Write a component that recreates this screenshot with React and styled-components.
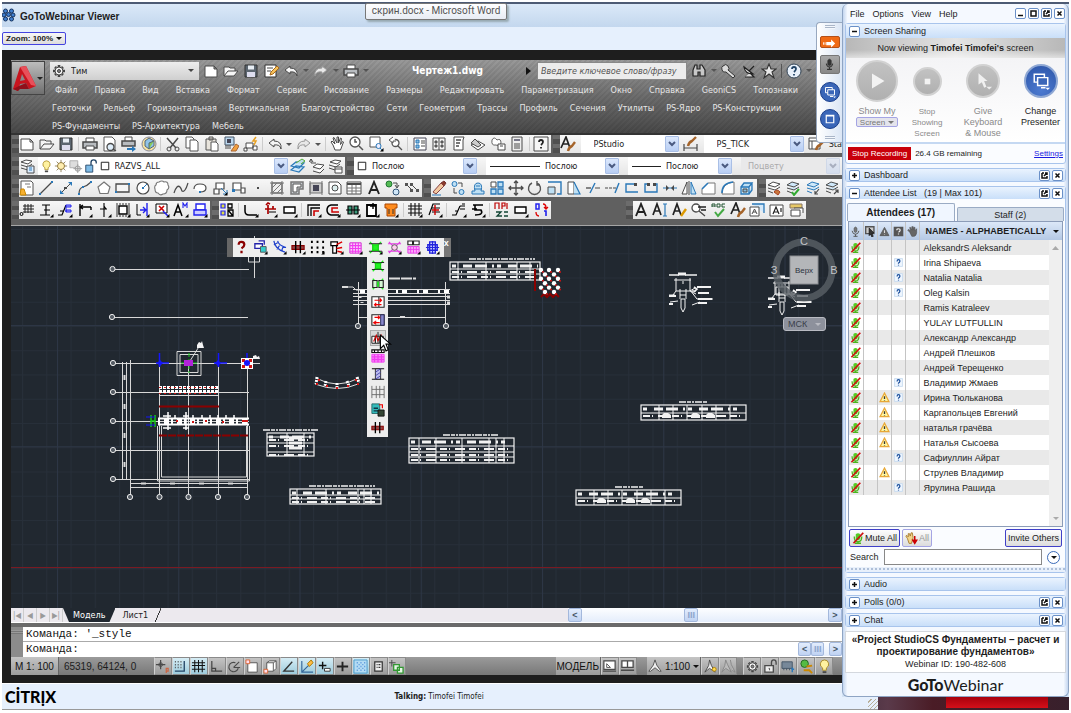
import React from 'react';
import styled, { createGlobalStyle, css } from 'styled-components';

const tahoma = '"DejaVu Sans Condensed", "DejaVu Sans", sans-serif';
const arial = '"Liberation Sans", Arial, sans-serif';

const GlobalStyle = createGlobalStyle`
  * { box-sizing: border-box; }
  body { margin: 0; background: #fff; font-family: ${arial}; font-size: 9px; color: #1c1c1c; }
  button, input, select { font: inherit; color: inherit; margin: 0; padding: 0; border: 0; background: none; }
  svg { display: block; }
`;

/* icons: each entry is a list of [path, stroke, fill, width] on a 16x16 grid */
const ink = '#4a4a4a';
const blue = '#2a78b8';
const corner = ['M12 15.500h3.500V12z', 'none', '#000'];
const cell = '#bfe0f4';

const icons = {
  page: [['M2 3h9l3 3v8H2zM11 3v3h3', ink, '#fff']],
  open: [['M1 13V4h5l1 1h5v3M1 13L5 8h10l-4 5z', ink, '#f6f6f6']],
  save: [['M2 2h12v12H2z', '#333', '#5c6670'], ['M5 2.500h6v4H5z', 'none', '#e8eef4'], ['M4 9h8v5H4z', 'none', '#dde']],
  saveAs: [['M2 2h11v12H2z', '#333', '#fff'], ['M4 5h6M4 8h4', ink], ['M7 12l1-3 6-6 2 2-6 6z', '#a86a1c', '#f6c15a']],
  undo: [['M7 3L2 7l5 4V9q6-1 7 4 1-8-7-8z', ink, '#f5f5f5']],
  redo: [['M9 3l5 4-5 4V9q-6-1-7 4-1-8 7-8z', '#999', '#e8e8e8']],
  print: [['M4 6V2h8v4', ink, '#fff'], ['M1 6h14v6H1z', ink, '#b8bcc0', 1.5], ['M4 10h8v4H4z', ink, '#fff']],
  preview: [['M2 1h8l3 3v11H2z', '#555', '#fff'], ['M12 11a3.500 3.500 0 1 1-7 0 3.500 3.500 0 0 1 7 0zM11 13l3 2', ink, '#dfeefa', 1.3]],
  publish: [['M4 5V1h7v4', ink, '#fff'], ['M1 5h13v5H1z', ink, '#b8bcc0', 1.5], ['M6 12h5v-2l4 3-4 3v-2H6z', 'none', blue]],
  globe: [['M15 8A7 7 0 1 1 1 8a7 7 0 0 1 14 0z', '#889', '#f6e3a0'], ['M4 5l4-3 5 3v5l-5 3-4-3z', '#567', '#8fc3e8'], ['M8 13V7l5-2', '#567', '#8c5']],
  cut: [['M2 2l9 10M13 2L5 12', ink, 'none', 1.5], ['M6 13a2 2 0 1 1-4 0 2 2 0 0 1 4 0zM14 13a2 2 0 1 1-4 0 2 2 0 0 1 4 0z', ink]],
  copy: [['M2 1h6l2 2v9H2z', '#555', '#fff'], ['M6 4h6l2 2v9H6z', '#555', '#fff']],
  paste: [['M2 3h10v11H2zM5 1h4v3H5z', '#555', '#e8e4dc'], ['M7 6h5l2 2v7H7z', '#555', '#fff']],
  match: [['M2 1h9v8H2z', '#456', '#bcd8ee'], ['M4 3h4v4H4z', 'none', '#445'], ['M2 10h6M2 12h6', ink], ['M8 15l5-7 3 2-3 5z', '#a63', '#f0a040']],
  blockEdit: [['M3 7h7v5H3zM1 12h3v3H1zM10 10h4v4h-4z', ink, '#fff'], ['M13 1l-3 4h3l-2 4', '#e8a020', 'none', 1.5]],
  hand: [['M4 9L2 6l1-1 3 3-2-6 1-.5L8 7V1h1.500v6l2-5 1 .5-1 6 2-3 1 .5-3 8H6z', ink, '#fff']],
  zoomTime: [['M11 6A5 5 0 1 1 1 6a5 5 0 0 1 10 0z', '#555', '#fff', 1.3], ['M6 3v3h2M10 10l4 4', '#555', 'none', 1.5]],
  zoomWin: [['M2 1h10v10H2z', '#555', '#fff'], ['M13 10a2.500 2.500 0 1 1-5 0 2.500 2.500 0 0 1 5 0zM12 12l3 3', blue, '#eef']],
  zoomPrev: [['M11 7a3.500 3.500 0 1 1-7 0 3.500 3.500 0 0 1 7 0zM10 10l4 4', '#555', '#fff', 1.3], ['M5 1L1 4l4 3V5h3', '#555', '#fff']],
  props: [['M2 2h12v12H2z', '#445', '#fff'], ['M4 4h3v3H4zM4 9h3v3H4z', blue, '#8bd'], ['M9 5h4M9 7h4M9 10h4', ink]],
  palette: [['M2 2h12v12H2zM8 2v12', ink, '#f4f4f4'], ['M4 5h2v2H4zM4 9h2v2H4zM10 5h2v2h-2zM10 9h2v2h-2z', ink, '#888']],
  toolPal: [['M3 1h10l-1 3v10H3z', ink, '#fff'], ['M5 4h5M5 7h4M5 10h3', ink, 'none', 1.5]],
  sheet: [['M1 9l7-4 7 4-7 5z', ink, '#fff'], ['M1 7l4-4 6 6-3 2z', ink, '#ccc']],
  markup: [['M2 4q2-4 5 0 4-2 4 3-1 4-5 2-5 1-4-5z', '#666', '#fff'], ['M8 8h7v6H8zM10 10h3', ink, '#fff']],
  calc: [['M3 1h10v14H3z', ink, '#eee'], ['M5 3h6v2H5z', 'none', '#778'], ['M5 8h6M5 10h6M5 12h6', ink]],
  help: [['M1 1h14v14H1z', ink, '#f6f6f6'], ['M6 6q0-2 2-2t2 2q0 1-2 3M8 11v1.500', '#222', 'none', 1.8]],
  helpRound: [['M15 8A7 7 0 1 1 1 8a7 7 0 0 1 14 0z', '#345', '#e8f0fa'], ['M6 6q0-2 2-2t2 2q0 1-2 3M8 11v1.500', '#246', 'none', 1.8]],
  fontBrush: [['M1 12L6 1l4 11M3 8h6', '#222', 'none', 1.7], ['M8 15q1-4 4-5l3-4', '#a5642a', 'none', 2.4]],
  dimBrush: [['M1 8v7M14 8v7M1 12h13', ink, 'none', 1.2], ['M5 10q1-4 4-5l4-4', '#a5642a', 'none', 2.4]],
  tableBrush: [['M1 2h11v11H1zM1 5h11M4 5v8', ink, '#fff'], ['M8 14q1-4 4-5l3-3', '#a5642a', 'none', 2.4]],
  layers: [['M2 4l5-2 6 1-4 3zM2 7l7 2 4-3M2 10l7 2 4-3', ink, '#fff'], ['M8 8h7v7H8z', ink, '#def'], ['M10 10h3M10 12h3', blue]],
  layerCur: [['M1 12l5-4 8 1-5 5zM1 8l5-4 8 1-5 5z', blue, '#cfe8fa', 1.2], ['M6 5l6-4 3 2-4 3', '#5a3', '#bde']],
  layerPrev: [['M4 9l4-3 7 1-4 4zM4 13l7 2 4-4', ink, '#fff'], ['M2 1v4h5M2 1l-2 3M2 1l2 3', ink]],
  layerState: [['M3 4l5-2 6 1-4 3zM2 7l7 2 4-3M2 10l6 2', ink, '#fff'], ['M8 9h7v6H8zM8 11h7', ink, '#fff']],
  layerBrush: [['M2 5l5-3 7 2-5 3zM2 8l7 2 5-3M2 11l5 2', ink, '#fff'], ['M8 12q3-4 6 0l-2 3z', '#a42', '#c8763c']],
  layerCheck: [['M2 5l5-3 7 2-5 3zM2 8l7 2 5-3M2 11l5 2', ink, '#cfe8fa'], ['M7 12l2 3 5-6', '#3a3', 'none', 2]],
  layerIn: [['M2 5l5-3 7 2-5 3zM2 8l7 2 5-3M2 11l5 2', blue, '#cfe8fa'], ['M14 9l-4 5M10 11v3h3', ink, 'none', 1.2]],
  layerOut: [['M2 5l5-3 7 2-5 3zM2 8l7 2 5-3M2 11l5 2', ink, '#cfe8fa'], ['M10 14l4-4M11 10h3v3', ink, 'none', 1.2]],
  bulb: [['M8 1a4.500 4.500 0 0 1 2 8.500V12H6V9.500A4.500 4.500 0 0 1 8 1z', '#a98a2a', '#fff2a0'], ['M6 14h4', ink, 'none', 2]],
  sun: [['M8 1v14M1 8h14M3 3l10 10M13 3L3 13', '#8a7a50'], ['M12 8a4 4 0 1 1-8 0 4 4 0 0 1 8 0z', '#8a7030', '#ffeeb0']],
  freeze: [['M1 2h9v8H1z', '#aaa', '#ddd'], ['M13 11a3 3 0 1 1-6 0 3 3 0 0 1 6 0z', '#999', '#ddd'], ['M10 6v10M5 11h10', '#999']],
  lock: [['M2 7h8v8H2z', '#246', '#7fbbe6'], ['M8 7V4q0-3 3-3t3 3v1', '#246', 'none', 1.5]],
  square: [['M3 3h10v10H3z', '#222', '#fff', 1.3]],
  line: [['M2 14L14 2', ink, 'none', 1.2], ['M13 1h2v2h-2zM1 13h2v2H1z', 'none', blue]],
  xline: [['M2 14L14 2', ink], ['M10 2h4v4zM6 14H2v-4z', 'none', blue], ['M6 7h3v2H6z', 'none', ink]],
  pline: [['M2 14q0-6 4-7t8-5', ink, 'none', 1.2], ['M13 1h2v2h-2zM1 13h2v2H1zM5 6h2v2H5z', 'none', blue]],
  polygon: [['M8 2l6 5-2 6.500H4L2 7z', '#777', '#fff', 1.2]],
  rect: [['M1 4h13v8H1z', ink, '#f6f6f6', 1.3], ['M13 3h2v2h-2zM0 11h2v2H0z', 'none', blue]],
  circle: [['M14 8A6 6 0 1 1 2 8a6 6 0 0 1 12 0z', ink, '#fff', 1.2], ['M8 8l4-4', blue], ['M7 7h2v2H7z', 'none', blue]],
  cloud: [['M5 2q3-2 5 0 4-1 4 3 2 3-1 5 0 4-4 4-3 2-5-1-3 0-3-4-1-3 1-4 0-3 3-3z', '#777', '#fff', 1.1]],
  spline: [['M1 13q3-9 6-6 1 1 2 4 3 2 6-8', ink, 'none', 1.2]],
  ellipse: [['M2 9q0-5 6-5t6 4-6 4', ink, '#fff', 1.2], ['M7 11h2v2H7z', 'none', blue]],
  block: [['M4 3h8v6H4zM2 9h5v5H2z', ink, '#fff', 1.2], ['M9 8l6 6M15 10v4h-4', blue]],
  makeBlock: [['M2 3h8v7H2zM10 8h4v5h-4z', ink, '#fff', 1.2], ['M1 9h3v3H1z', 'none', blue]],
  point: [['M7 7h2v2H7z', 'none', ink]],
  hatch: [['M3 3h10v10H3z', ink, '#eee'], ['M3 8l5-5M3 13L13 3M8 13l5-5M1 3h14M1 13h14M3 1v14M13 1v14', '#777']],
  gradient: [['M2 2h12v7h-4v5H2z', '#777', '#c8ccd0', 1.5], ['M4 4h8v3H8v5H4z', '#555', '#fff']],
  boundary: [['M2 3h12v10H2z', '#777', '#ccc'], ['M5 5h6v6H5z', 'none', '#445'], ['M2 1v14M14 1v14', '#777']],
  region: [['M2 2h9l3 3v9H2z', ink, '#fff'], ['M11 8a3 3 0 1 1-6 0 3 3 0 0 1 6 0z', ink, '#dee']],
  table: [['M1 2h14v12H1z', ink, '#fff'], ['M1 3h14v2H1z', 'none', ink], ['M1 8h14M1 11h14M6 5v9M10 5v9', '#777']],
  letterA: [['M3 14L8 2l5 12M5 10h6', '#222', 'none', 1.9]],
  addSel: [['M7 4a3 3 0 1 1-6 0 3 3 0 0 1 6 0z', '#273', '#5b5'], ['M14 12a3 3 0 1 1-6 0 3 3 0 0 1 6 0z', '#357', '#cfe6f8'], ['M8 3h4v4M10 5l2 3 2-3', ink]],
  dots: [['M2 4l6 6M7 4l6 6', ink], ['M1 3h3v3H1zM6 3h3v3H6zM6 9h3v3H6zM12 9h3v3h-3z', 'none', '#555']],
  sheetYellow: [['M2 1h10l2 2v12H2z', '#555', '#fff'], ['M2 9h3l2 6H1z', '#c80', '#f6b030'], ['M6 4h5M8 7h4', '#777']],
  erase: [['M2 12l3 2 8-8-3-3z', '#844', '#f2c8a0'], ['M10 3l3-2 2 2-2 3', '#733', '#8a3a2a'], ['M1 15h9', blue]],
  copyObj: [['M7 4a2.500 2.500 0 1 1-5 0 2.500 2.500 0 0 1 5 0zM14 12a2.500 2.500 0 1 1-5 0 2.500 2.500 0 0 1 5 0z', blue, cell], ['M8 3h4v4M4 8v5h3', ink]],
  offset: [['M2 14h12v-3h-3q2-8-3-8T5 11H2z', blue, cell], ['M4 9h8M6 6h4', blue]],
  array: [['M2 2h5v5H2z', ink, '#fff'], ['M9 2h5v5H9zM2 9h5v5H2zM9 9h5v5H9z', blue, cell, 1.3]],
  move: [['M8 1v14M1 8h14M6 3l2-2 2 2M6 13l2 2 2-2M3 6L1 8l2 2M13 6l2 2-2 2', ink, 'none', 1.3]],
  rotate: [['M10 3a6 6 0 1 1-5 0M10 1v4h3', '#555', 'none', 1.4]],
  scale: [['M1 2h13v12h-4', blue, 'none', 1.4], ['M1 7h7v7H1z', ink, cell]],
  stretch: [['M2 2h6v12H2z', ink, '#fff'], ['M8 2l6 12H8', blue, cell, 1.2]],
  trim: [['M1 8h5', ink, 'none', 1.3], ['M5 13L10 3', blue, 'none', 1.4], ['M10 8h5', ink, 'none', 1]],
  extend: [['M1 8h3M5 8h3M9 8h3', ink, 'none', 1.2], ['M11 13l4-10', blue, 'none', 1.4]],
  breakPt: [['M13 4H2v8h12', blue, 'none', 1.4], ['M10 3h3v3h-3z', 'none', ink]],
  breakGap: [['M5 4H2v8h12V4h-4', blue, 'none', 1.4], ['M4 3h3v3H4zM10 3h3v3h-3z', 'none', ink]],
  join: [['M1 8h14', blue], ['M4 5v6l3-3zM12 5v6L9 8z', 'none', ink]],
  mirror: [['M6 2v12H1z', ink, '#fff'], ['M10 2v12h5z', blue, cell], ['M8 1v14', ink]],
  chamfer: [['M1 14V9l6-6h7v11z', '#777', '#fff'], ['M1 9l6-6', blue, 'none', 1.6]],
  fillet: [['M2 14q0-11 12-12v12z', '#777', '#fff'], ['M2 13q0-10 11-11', blue, 'none', 1.6]],
  explode: [['M2 7h8v7H2zM2 7l3-4h8l-3 4M13 3v7l-3 4', blue, cell, 1.3], ['M4 9h4v3H4z', ink, '#8bd']],
  gridAxis: [['M6 2v9M9 2v9M12 2v9M4 4h11M4 7h11M4 10h11', '#222'], ['M4 12a1.500 1.500 0 1 1-3 0 1.500 1.500 0 0 1 3 0z', '#000']],
  levels: [['M4 3h8M6 8h6M2 13h10M8 3v10', '#000', 'none', 1.2]],
  axisBlue: [['M1 13h4l4-10M3 9h4', '#000', 'none', 1.2], ['M9 3h5v2H9zM9 8h5v2H9zM9 5v5', '#22e', '#aaf']],
  leaderL: [['M3 2v12M3 5h11M6 3L3 5l3 2M14 5v3', '#000', 'none', 1.4]],
  axisV: [['M8 1v14M4 7h7M8 4l2 3', '#000', 'none', 1.1]],
  hatchBox: [['M4 4h8v8H4z', '#000', '#fff', 1.4], ['M2 1v14M5 1v2M8 1v2M11 1v2M14 1v14M5 13v2M8 13v2M11 13v2', '#333', 'none', 1]],
  arrowBlue: [['M3 2v11h4', '#000'], ['M13 1v13M6 8h6M9 5l3 3-3 3', '#22e', 'none', 1.4]],
  boxCross: [['M2 2h11v9H2z', '#000', '#fff'], ['M5 4l5 5M10 4L5 9', '#c00', 'none', 1.6], ['M9 9l5 5', '#22e', 'none', 1.5]],
  textM: [['M1 14L5 3l4 11M3 10h4', '#000', 'none', 1.5], ['M10 6V1l2 3 2-3v5', '#22e', 'none', 1.1]],
  blueBoxes: [['M4 2h9v6H4z', '#22e', '#fff', 1.4], ['M2 8h12v5H2z', '#22e', '#ccf', 1.4]],
  boltSet: [['M2 2h4v4H2zM2 9h4v4H2z', '#22e', '#dd4', 1.2], ['M9 2h4v4H9zM9 8h5v6H9zM9 8l5 6', '#000', 'none', 1.3]],
  curveL: [['M2 3v6q0 4 4 4h8', '#000', 'none', 1.5]],
  redTee: [['M3 7h11M6 3v9M8 2L6 1 4 3M11 4v3', '#a00', 'none', 1.7], ['M7 10h7', '#000']],
  smallBox: [['M2 5h11v6H2z', '#000', '#fff', 1.4]],
  cornerRed: [['M2 14V3h12M5 14V6h9', '#000', 'none', 1.3], ['M8 14V9h5', '#c00', 'none', 1.6]],
  loopRed: [['M13 3H6Q2 4 2 8t4 5h8', '#000', 'none', 1.5], ['M13 6H7v4h7', '#c00', 'none', 1.5]],
  beamGreen: [['M3 4h4v8H3zM9 4h4v8H9z', '#000', '#3a9a7a', 1.2], ['M1 8h14', '#000']],
  boltBox: [['M3 3h9v11H3z', '#000', '#fff', 1.8], ['M9 1v6M6 4h6', '#000', 'none', 1.4]],
  orange: [['M2 2h12v4h-2v8H4V6H2z', '#a40', '#ff8c1e'], ['M6 7v5M10 7v5', '#333']],
  mesh: [['M4 1v13M8 1v13M12 1v13M1 4h14M1 7h14M1 11h14', '#111', 'none', 1.1]],
  meshRed: [['M2 13L6 2h7M5 6h8M5 10h8', '#000', 'none', 1.2], ['M8 3v10M5 8h7', '#c00', 'none', 1.4]],
  zigzag: [['M1 13h4l4-9M4 9h3M9 4h5M9 7h5M11 2h3', '#000', 'none', 1.2]],
  fiveB: [['M3 3h10M5 3v5h6q3 5-6 5M2 7h5', '#000', 'none', 1.6]],
  num: [['M1 7V1h4v6M8 7V1h3v3H8M13 1v6', '#b00', 'none', 1.2], ['M2 10h5l-4 4h5M10 10h4M10 14h4', '#143', 'none', 1.3]],
  zeroOne: [['M3 2h3v5H3z', '#22e', 'none', 1.5], ['M10 2q3 0 3 4M11 5l2 2 2-2M6 14q-3 0-3-4', '#d00', 'none', 1.3], ['M11 9h2v5', '#22e', 'none', 1.6]],
  textI: [['M1 13L5 2l4 11M3 9h5', '#222', 'none', 1.7], ['M11 2h4M13 2v12M11 14h4', blue, 'none', 1.2]],
  textEdit: [['M1 13L5 2l4 11M3 9h5', '#222', 'none', 1.7], ['M9 14l5-7', '#d90', 'none', 2.4]],
  find: [['M9 6a4 4 0 1 1-8 0 4 4 0 0 1 8 0zM8 9l6 5', ink, '#fff', 1.3], ['M7 5h8M10 8h5', '#222', 'none', 1.4]],
  spell: [['M1 5V2h3v3M1 4h3M6 2v3h3V2H6M11 5V2h3M11 5h3', '#253', 'none', 1], ['M4 10l3 4 6-7', '#4a4', 'none', 2]],
  textScale: [['M3 2h12v9', blue, '#d4e8f8', 1.3], ['M1 5h9v9H1z', ink, '#fff'], ['M3 12l2.500-5L8 12M4 10h3', ink]],
  textJust: [['M1 3h13v11H1z', ink, '#fff'], ['M4 12l3-7 3 7M5 10h4M12 6v4', '#222', 'none', 1.2]],
  textBox: [['M2 2h12v4H2z', '#876', '#e6c866'], ['M3 8h9v6H3zM6 6h9v5', ink, '#fff']],
  binoc: [['M2 13V7l2-5h2v4h3V2h2l3 5v6H9V9H7v4z', '#222', '#c8c8c8', 1.2]],
  key: [['M2 3q3-3 5 0t0 4l7 6-2 2-7-6Q2 10 1 7t1-4z', '#333', '#dadada']],
  dish: [['M3 4q1 7 9 7zM8 8l5-5M4 14h9l-4-4', '#222', '#ddd', 1.2]],
  star: [['M8 1l2 5h5l-4 3 2 6-5-4-5 4 2-6-4-3h5z', '#333', '#e8e8e8', 1.1]],
  gear: [['M8 2v2M8 12v2M2 8h2M12 8h2M4 4l1 1M11 11l1 1M12 4l-1 1M5 11l-1 1', '#444', 'none', 2.6], ['M12 8a4 4 0 1 1-8 0 4 4 0 0 1 8 0z', '#444', '#f4f4f4'], ['M9.500 8a1.500 1.500 0 1 1-3 0 1.500 1.500 0 0 1 3 0z', '#444', '#888']],
  question: [['M5 5q0-3 3-3t3 3q0 2-3 4M8 11.500V14', '#8a0000', 'none', 2.4]],
  pileBlue: [['M2 4h8v5H2zM6 1h6v4', '#22a', '#fff', 1.4], ['M8 7h6v6H8z', '#555', '#3cc']],
  arcBlue: [['M2 1q1 9 12 12M6 1q1 5 9 7M2 5l4-2M5 10l3-4M10 12l2-5', '#24c', 'none', 1.3]],
  beamRed: [['M1 6h13v4H1z', '#800', '#944', 1.2], ['M5 1v13M10 1v13', '#000', 'none', 1.5]],
  nine: [['M1 2h2M7 2h2M13 2h2M1 8h2M7 8h2M13 8h2M1 13h2M7 13h2M13 13h2', '#000', 'none', 2.4]],
  cageRed: [['M2 2h7v4H2zM4 6v8h4V6', '#000', '#fff', 1.3], ['M8 5l6-3M8 9l6-1M9 12l5 1', '#d00', 'none', 1.5]],
  pinkGrid: [['M2 3h12v11H2z', '#d020d0', '#fbd0fb'], ['M5 3v11M8 3v11M11 3v11M2 6h12M2 9h12M2 12h12', '#f03cf0', 'none', 1.2]],
  greenBox: [['M2 2l12 12M14 2L2 14', '#2e2', 'none', 1.4], ['M1 4h14M1 12h14', '#111', 'none', 1], ['M5 5h6v6H5z', '#1c1', '#21f321', 1.2]],
  greenPair: [['M2 2l12 12M14 2L2 14', '#2e2', 'none', 1.4], ['M2 4h5v8H2zM9 4h5v8H9z', '#222', '#d6f6d6', 1.3], ['M7 5h2v6H7z', 'none', '#2e2']],
  pinkX: [['M2 2l12 12M14 2L2 14M1 4h14M1 12h14', '#e23ce2', 'none', 1.3], ['M11 8a3 3 0 1 1-6 0 3 3 0 0 1 6 0z', '#555', '#fce']],
  pinkTop: [['M2 1h5v4H2zM8 1h6v4H8z', '#222', '#fff', 1.2], ['M2 7h12v7H2z', '#e23ce2', '#f9a8f9'], ['M5 7v7M8 7v7M11 7v7M2 10h12', '#f03cf0']],
  blueGrid: [['M3 5h10v6H3zM5 2h6v12H5z', '#22d', '#d8deff', 1.5], ['M1 8h14M8 1v14', '#22d', 'none', 1.3]],
  redArrows: [['M1 2h14v12H1zM9 2v12', '#222', '#fff', 1.2], ['M4 6h8M10 4l2 2-2 2M12 11H4M6 9l-2 2 2 2', '#e00', 'none', 1.3]],
  redHatch: [['M1 2h14v12H1z', '#222', '#fff', 1.2], ['M11 2h4v12h-4z', '#225', '#88c'], ['M4 5h6M8 3l2 2-2 2M10 11H3M6 9l-3 2 3 2', '#e00', 'none', 1.3]],
  stirrup: [['M1 6h4v8H1zM5 6h5v8H5zM8 1v13M11 6h3v8', '#222', '#fff', 1.1], ['M3 12l3-7 2 6 4-7', '#c00', 'none', 1.3]],
  pinkFull: [['M1 1h14v3H1z', '#111', '#fff', 1.3], ['M4 1v3M8 1v3M12 1v3', '#111', 'none', 1.3], ['M1 6h14v9H1z', '#f03cf0', '#fb8cfb'], ['M4 6v9M8 6v9M12 6v9M1 9h14M1 12h14', '#f03cf0', 'none', 1.5]],
  ibeam: [['M1 2h14M1 14h14', '#111', 'none', 1.4], ['M5 2h6v12H5z', '#222', '#bbe'], ['M5 6l6-4M5 10l6-4M5 14l6-4', '#44a']],
  mesh3: [['M1 1v14M6 1v14M10 1v14M15 1v14M1 5h14M1 11h14', '#666']],
  tealCalc: [['M1 1h9v11H1z', '#266', '#3bb'], ['M3 6h5M3 9h5', '#134', 'none', 1.5], ['M8 8h7v7H8z', '#111', '#343'], ['M9 2h4v4', '#e00', 'none', 1.4]],
  snapPt: [['M6 1v10M1 6h10', ink, 'none', 1.3], ['M8 6a2 2 0 1 1-4 0 2 2 0 0 1 4 0z', ink], ['M12 15v-5h2v3h-2', '#c64', 'none', 1.3]],
  snapDots: [['M2 3h1M5 3h1M8 3h1M2 6h1M5 6h1M8 6h1M2 9h1M5 9h1M8 9h1', ink, 'none', 1.6], ['M12 2v11H2', '#246', 'none', 1.4]],
  ortho: [['M3 2v11h11M3 10h4v3', '#444', 'none', 1.3]],
  polar: [['M12 9a5 5 0 1 1-3-5M7 9h7M7 9l6-6', ink, 'none', 1.2]],
  osnap: [['M3 4h10v10H3z', '#555', '#fff'], ['M1 1h4v4H1z', '#d63', '#fde']],
  osnap3: [['M4 4l3-2h7v8l-3 3H4zM4 4h7v9M11 4l3-2', '#555', '#fff'], ['M1 11h4v4H1z', '#d63', '#fde']],
  angle: [['M12 3L3 13h11', '#333', 'none', 1.4]],
  ducs: [['M3 2v12h12M3 14l7-7', '#369', 'none', 1.2], ['M9 5l4-4 2 3-4 4z', '#a70', '#fb4']],
  dyn: [['M2 7h8M6 3v8', '#111', 'none', 1.5], ['M8 10h6v3H8z', '#333', '#fff']],
  plus: [['M2 8h12M8 3v10', '#222', 'none', 2]],
  trans: [['M1 1h14v14H1z', '#4a9acc', '#b4dcf4'], ['M4 4h1M8 4h1M12 4h1M6 6h1M10 6h1M4 8h1M8 8h1M12 8h1M6 10h1M10 10h1M4 12h1M8 12h1M12 12h1', '#4a8ad8', 'none', 1.4]],
  quick: [['M4 3h8v10H4z', '#333', '#eee', 1.3], ['M6 6h1M8 6h2M6 9h1M8 9h2', '#333', 'none', 1.3]],
  selCycle: [['M3 1v7M0 4h7', ink], ['M5 6h6v6H5zM9 9h6v6H9z', '#393', '#e8f8e8', 1.4]],
  modelTri: [['M2 2h12v9H2zM1 13h14', ink, '#fff', 1.3], ['M5 9V5l4 4z', '#555']],
  layoutBoxes: [['M2 2h6v7H2zM8 2h6v7H8zM1 12h14', ink, '#fff', 1.4]],
  anno: [['M8 1l2 6 5 7h-2l-5-4-5 4H1l5-7z', ink, '#eee']],
  annoSun: [['M7 1l2 6 4 7-6-4-5 4 4-7z', ink, '#eee'], ['M14 11a2 2 0 1 1-4 0 2 2 0 0 1 4 0z', '#b80', '#fd5']],
  annoGray: [['M5 1l2 5 4 8-6-4-4 4 3-7zM10 1l1 5 4 8-3-2', '#888', '#bbb']],
  unlock: [['M2 7h9v7H2z', ink, '#eee', 1.4], ['M9 7V4q0-3 2.500-3T14 4v2', ink, 'none', 1.4], ['M6 10h1v2', ink]],
  hardware: [['M1 3h11v7H1z', '#456', '#789'], ['M3 10v2M6 10v2M9 10v2', '#456'], ['M12 9v5M11 11h3', blue, 'none', 1.5]],
  isolate: [['M10 5a4 4 0 1 1-8 0 4 4 0 0 1 8 0z', '#262', '#5b4'], ['M5 12h6l3 3M8 8l6-1', '#c80', 'none', 2]],
  mic: [['M6 3q2-3 4 0v5q-2 3-4 0z', '#555', '#777'], ['M3 7q1 5 5 5t5-5M8 12v3M5 15h6', '#555', 'none', 1.4]],
  micMuted: [['M5 3q3-3 6 0v6q-3 4-6 0z', 'none', '#55cc22'], ['M3 6q0 7 5 7t5-7M8 12v3M4 15h8', '#4ab81e', 'none', 1.8], ['M15 1L2 15', '#d01010', 'none', 2.4]],
  warn: [['M8 1.500l6.500 12.500H1.500z', '#e8a838', '#fff6a0', 1.8], ['M8 6v4M8 11.500v1', '#333', 'none', 1.9]],
  warnGray: [['M8 2l6.500 12h-13z', '#555', '#666', 1.2], ['M8 6v4M8 11.500v1', '#ddd', 'none', 1.6]],
  qBlue: [['M1 1h14v14H1z', '#c6daf0', '#f0f7ff', 1.5], ['M5.500 6q0-3 2.500-3t2.500 2.500Q10 8 8 9v1M8 12v1.500', '#1c4f9c', 'none', 2.2]],
  qGray: [['M2 2h12v12H2z', '#555', '#555', 2], ['M5.500 6q0-2 2.500-2t2.500 2Q10 8 8 9M8 11v1.500', '#eee', 'none', 1.8]],
  handGray: [['M4 9L1 6l1-1 3 2-1-5h1l2 4V1h2v5l1-4h1.500v5L14 4v6q-1 5-4 5H7z', '#555', '#666']],
  pageGray: [['M1 1h12v10H1z', '#555', '#ccc', 2], ['M6 3l7 7-3 1 2 4-2 1-2-4-2 2z', '#111', '#333']],
  handDown: [['M3 8L1 5l1-1 2 2V2h1.500l1 3 1-4H9l1 6-2 7H5z', '#a07020', '#f3d58a'], ['M12 5v7M9.500 10l2.500 4 2.500-4z', '#c00', '#c00', 1.8]],
  play: [['M4 2l10 6-10 6z', 'none', '#f2f2f2']],
  stop: [['M3 3h10v10H3z', 'none', '#f2f2f2']],
  pointer: [['M4 1l8 7H9l2 5-2 1-2-5-3 2z', 'none', '#f0f0f0'], ['M11 13h5l-2.500 2.500z', 'none', '#eee']],
  screens: [['M2 2h9v7H2z', '#fff', 'none', 1.3], ['M5 5h9v7H5zM8 14h4', '#fff', '#3a66b8', 1.3], ['M12 14h4l-2 2z', 'none', '#fff']],
  window: [['M3 3h10v10H3zM3 4h10', '#fff', 'none', 1.6]],
  micDark: [['M6 3q2-3 4 0v5q-2 3-4 0z', '#333', '#333'], ['M4 7q1 4 4 4t4-4M8 11v3M5 14h6', '#333', 'none', 1.3]],
  orangeArrow: [['M4 6h6V3l5 5-5 5v-3H4z', 'none', '#fff'], ['M0 8h1M2 8h1', '#fff', 'none', 3]],
  cursor: [['M3 1v12l3-3 2 5 2-1-2-5h4z', '#000', '#fff']],
};

const Glyph = ({ name, size = 16, fly }) => (
  <svg width={size} height={size} viewBox="0 0 16 16" aria-hidden="true">
    {(fly ? [...icons[name], corner] : icons[name]).map(([d, stroke = ink, fill = 'none', width = 1], i) => (
      <path key={i} d={d} stroke={stroke} fill={fill} strokeWidth={width} />
    ))}
  </svg>
);

const Page = styled.div`
  min-height: 100vh;
  padding: 2px 2px 3px;
  display: flex;
  flex-direction: column;
`;

const Desktop = styled.div`
  position: relative;
  flex: 1;
  display: flex;
  border-top: 2px solid #4d5b74;
  background: #d3e3f5;
`;

const Viewer = styled.main`
  flex: 1;
  min-width: 0;
  display: flex;
  flex-direction: column;
`;

const TitleBar = styled.header`
  height: 23px;
  display: flex;
  align-items: center;
  gap: 4px;
  padding-bottom: 2px;
  background: linear-gradient(#dbe9f8, #c3d7ee);
`;

const Title = styled.h1`
  margin: 3px 0 0;
  font-size: 10px;
  font-weight: bold;
`;

const TaskTip = styled.div`
  position: absolute;
  top: -1px;
  left: 34%;
  height: 17px;
  padding: 0 6px;
  border: 1px solid #777;
  border-radius: 2px;
  background: linear-gradient(#fff, #e8ecf4);
  box-shadow: 2px 2px 2px #7889;
  font: 10px/14px Roboto, "Open Sans", sans-serif;
  color: #555;
`;

const ZoomRow = styled.div`
  height: 23px;
  padding-top: 5px;
  background: #e6f0fd;
`;

const ZoomButton = styled.button`
  display: flex;
  align-items: center;
  gap: 3px;
  height: 13px;
  padding: 0 3px;
  border: 1px solid #4343e0;
  border-radius: 2px;
  background: linear-gradient(#f7f7f7, #dcdcdc);
  font-size: 8px;
  font-weight: bold;
`;

const Frame = styled.div`
  flex: 1;
  display: flex;
  flex-direction: column;
  padding: 10px 0 8px 9px;
  background: #1e1e1e;
`;

const Ribbon = styled.div`
  display: flex;
  height: 75px;
  padding-top: 1px;
  background: repeating-linear-gradient(135deg, #0000 0 2px, #00000010 2px 4px), linear-gradient(#999, #6c6c6c 50%, #484848);
  border-bottom: 2px solid #333;
`;

const AppButton = styled.button`
  width: 34px;
  height: 34px;
  border: 1px solid #444;
  background: linear-gradient(#bdbdbd, #6f6f6f);
  display: flex;
  align-items: center;
`;

const RibbonBody = styled.div`
  flex: 1;
  min-width: 0;
  padding-left: 5px;
  font-family: ${tahoma};
`;

const QuickRow = styled.div`
  display: flex;
  align-items: center;
  height: 19px;
  padding-right: 30px;
`;

const IconRow = styled.div`
  display: flex;
  align-items: center;
  gap: 4px;
  padding-left: 4px;
`;

const IconButton = styled.button`
  flex: none;
  display: flex;
  align-items: center;
  justify-content: center;
  ${p => p.$hot && css`
    outline: 1px solid #aaa;
    background: #d8d8d8;
  `}
`;

const Caret = styled.span`
  flex: none;
  width: 0;
  border: 3px solid transparent;
  border-width: 3px 3px 0;
  border-top-color: ${p => p.$color || '#111'};
`;

const FileName = styled.strong`
  flex: 1;
  text-align: center;
  font-size: 10px;
  color: #fff;
`;

const KeywordInput = styled.input`
  width: 150px;
  height: 18px;
  margin-left: 5px;
  padding: 0 3px;
  border: 1px solid #888;
  background: #ececec;
  font-style: italic;
  &::placeholder { color: #555; opacity: 1; }
`;

const MenuRow = styled.nav`
  display: flex;
  gap: ${p => p.$gap}px;
  padding-left: ${p => p.$start}px;
  margin-top: ${p => (p.$first ? 4 : 5)}px;
  line-height: 13px;
  white-space: nowrap;
`;

const MenuLink = styled.a`
  color: #e6e6e6;
  text-decoration: none;
`;

const Toolbars = styled.div`
  display: flex;
  flex-direction: column;
  gap: 4px;
  padding: 0 0 6px 1px;
  background: #606060;
  font-family: ${tahoma};
`;

const ToolRow = styled.div`
  display: flex;
  gap: 2px;
  height: 18px;
  overflow: hidden;
`;

const Bar = styled.div`
  flex: 0 ${p => (p.$grow ? 1 : 0)} ${p => p.$w}px;
  min-width: 0;
  display: flex;
  align-items: center;
  justify-content: space-between;
  padding-right: ${p => (p.$tight ? 0 : 2)}px;
  margin-left: ${p => (p.$apart ? 73 : 0)}px;
  border-left: 7px solid #565656;
  border-image: repeating-linear-gradient(#505050 0 1px, #6c6c6c 1px 2px) 7;
  background: linear-gradient(#f7f7f7, #e6e6e6);
  overflow: hidden;
`;

const Divider = styled.span`
  width: 1px;
  height: 14px;
  background: ${p => p.$color || '#ccc'};
`;

const ComboBox = styled.div`
  flex: ${p => (p.$w ? `0 0 ${p.$w}px` : 1)};
  display: flex;
  align-items: center;
  gap: 1px;
  height: 18px;
  padding: 0 ${p => (p.$gray ? 5 : 0)}px 0 ${p => p.$pad || 2}px;
  background: ${p => (p.$off ? '#e9e9ea' : p.$gray ? 'linear-gradient(#ededed, #cfcfcf)' : '#fff')};
  color: ${p => (p.$off ? '#aaa' : '#222')};
`;

const Picker = styled.select`
  flex: 1;
  min-width: 0;
  height: 16px;
  appearance: none;
  padding-left: 3px;
  opacity: 1;
`;

const Chevron = styled.span`
  flex: none;
  display: grid;
  place-items: center;
  width: 14px;
  height: 16px;
  border: 1px solid #a9bfe6;
  border-radius: 1px;
  background: linear-gradient(#dce8fc, #b8cef4);
  opacity: ${p => (p.$off ? 0.4 : 1)};
`;

const LineSample = styled.span`
  width: ${p => p.$w}px;
  height: 1px;
  margin: 0 1px 0 2px;
  background: #222;
`;

const Canvas = styled.div`
  position: relative;
  flex: 1;
  min-height: 383px;
  border-top: 1px solid #a5a5a5;
  background: #212830;
`;

const Drawing = styled.svg`
  position: absolute;
  inset: 0;
  width: 100%;
  height: 100%;
`;

const FloatBar = styled.div`
  position: absolute;
  left: 216px;
  top: 12px;
  width: 224px;
  height: 19px;
  display: flex;
  align-items: center;
  justify-content: space-between;
  border-left: 6px solid #666;
  background: #efefef;
  padding-left: 1px;
`;

const CloseTab = styled.button`
  align-self: stretch;
  width: 7px;
  background: #777;
  color: #fff;
  font: bold 9px/10px ${arial};
  display: flex;
`;

const Flyout = styled.div`
  position: absolute;
  left: 356px;
  top: 31px;
  width: 21px;
  display: flex;
  flex-direction: column;
  align-items: center;
  gap: 4px;
  padding: 2px 0;
  background: #ededed;
`;

const Pointer = styled.div`
  position: absolute;
  left: 366px;
  top: 108px;
`;

const CubeWrap = styled.div`
  position: absolute;
  right: 3px;
  top: 6px;
  width: 70px;
`;

const CubeLabel = styled.button`
  display: flex;
  align-items: center;
  gap: 8px;
  height: 14px;
  margin: 14px 0 0 14px;
  padding: 0 4px;
  border: 1px solid #b9bbc2;
  border-radius: 3px;
  background: #8d919c;
  color: #3a3f4b;
`;

const SheetTabs = styled.div`
  display: flex;
  height: 15px;
  background: #ece9ee;
  border-bottom: 1px solid #fff;
  font-family: ${tahoma};
`;

const NavCell = styled.button`
  width: 13px;
  border-right: 1px solid #ccc;
  color: #999;
  font-size: 8px;
`;

const SheetTab = styled.button`
  height: 14px;
  padding: 0 ${p => (p.$active ? 10 : 7)}px;
  background: ${p => (p.$active ? '#212830' : 'none')};
  color: ${p => (p.$active ? '#fff' : '#222')};
  clip-path: ${p => (p.$active ? 'polygon(0 0, 100% 0, calc(100% - 6px) 100%, 6px 100%)' : 'none')};
`;

const Slash = styled.span`
  width: 6px;
  height: 14px;
  background: linear-gradient(to bottom right, #0000 46%, #333 48% 54%, #0000 56%);
`;

const Scroller = styled.div`
  width: ${p => p.$w}px;
  margin-left: auto;
  display: flex;
  justify-content: space-between;
  background: linear-gradient(#fdfeff, #e4edfb);
`;

const ScrollButton = styled.button`
  width: 14px;
  height: 14px;
  margin-right: ${p => (p.$thumb ? '10%' : 0)};
  border: 1px solid #a3b8dc;
  border-radius: 2px;
  background: linear-gradient(#e3edfd, #bfd2f2);
  font: bold 9px/10px ${arial};
  color: ${p => (p.$thumb ? '#8ca4cc' : '#456')};
`;

const CommandArea = styled.div`
  display: flex;
  height: 34px;
  border-top: 4px solid #6a6a6a;
  background: #fff;
`;

const CommandGrip = styled.div`
  width: 12px;
  background: repeating-linear-gradient(#9a9a9a 0 1px, #777 1px 2px) 0 3px / 100% 4px no-repeat, #8c8c8c;
`;

const CommandLines = styled.div`
  flex: 1;
  font: 11px/15px "Liberation Mono", "Courier New", monospace;
  color: #111;
`;

const CommandLine = styled.div`
  display: flex;
  justify-content: space-between;
  height: 15px;
  padding-left: 3px;
  border-bottom: 1px solid ${p => (p.$last ? '#fff' : '#aaa')};
`;

const Status = styled.div`
  display: flex;
  align-items: stretch;
  height: 18px;
  background: linear-gradient(#9a9a9a, #787878);
  overflow: hidden;
`;

const StatusText = styled.button`
  flex: none;
  padding: 0 ${p => p.$pad || 4}px;
  display: flex;
  align-items: center;
  gap: 3px;
  border-right: 1px solid #666;
  background: linear-gradient(#c4c4c4, #9c9c9c);
  font-size: 10px;
  color: #111;
`;

const Coords = styled.span`
  width: 95px;
  padding-left: 5px;
  line-height: 19px;
  font-size: 10px;
`;

const StatusCell = styled.button`
  flex: none;
  display: grid;
  place-items: center;
  width: 18px;
  border: 1px solid #8a8a8a;
  border-left-color: #d0d0d0;
  background: ${p => (p.$on ? 'linear-gradient(#d6edf5, #9dcbdc)' : 'linear-gradient(#c4c4c4, #9c9c9c)')};
`;

const Spring = styled.span`
  flex: 1;
`;

const StatusGap = styled.span`
  width: ${p => p.$w}px;
`;

const Footer = styled.footer`
  display: flex;
  align-items: center;
  height: 27px;
  padding-left: 3px;
  border-top: 1px solid #fff;
  border-bottom: 1px solid #999;
  background: #e6f0fd;
`;

const CitrixMark = styled.strong`
  font: 900 16px/20px Lato, sans-serif;
  color: #000;
`;

const Talking = styled.span`
  flex: 1;
  text-align: center;
  padding-right: 20px;
  font: 8px ${tahoma};
`;

const FloatStrip = styled.div`
  position: absolute;
  right: 227px;
  top: 18px;
  width: 26px;
  height: 121px;
  display: flex;
  flex-direction: column;
  align-items: center;
  justify-content: space-between;
  padding: 2px 0;
  border: 1px solid #98a8bf;
  border-right: 0;
  border-radius: 4px 0 0 4px;
  background: linear-gradient(90deg, #fff, #dbe6f5);
`;

const StripGrip = styled.span`
  width: 10px;
  height: 4px;
  background: repeating-linear-gradient(#aab6c8 0 1px, #f4f8fd 1px 2px);
`;

const StripButton = styled.button`
  display: grid;
  place-items: center;
  width: 20px;
  height: ${p => p.$h}px;
  border: 1px solid ${p => p.$edge};
  border-radius: ${p => (p.$round ? '50%' : '2px')};
  background: ${p => p.$bg};
`;

const Side = styled.aside`
  flex: 0 0 227px;
  display: flex;
  flex-direction: column;
`;

const Panel = styled.div`
  flex: 1;
  display: flex;
  flex-direction: column;
  padding: 0 2px;
  border: 1px solid #8fa5c4;
  border-top: 0;
  border-radius: 6px;
  background: linear-gradient(90deg, #c4d6ef, #f5f9ff 2% 98%, #c4d6ef);
`;

const PanelMenu = styled.div`
  display: flex;
  align-items: center;
  gap: 8px;
  height: 19px;
  padding: 0 1px 0 5px;
`;

const PanelLink = styled.a`
  color: #1c1c1c;
  text-decoration: none;
`;

const WinButtons = styled.div`
  display: flex;
  gap: 2px;
  margin-left: auto;
`;

const WinButton = styled.button`
  display: grid;
  place-items: center;
  width: 11px;
  height: 11px;
  border: 1px solid #6a90c8;
  border-radius: 2px;
  background: #fff;
`;

const Section = styled.section`
  margin-bottom: 4px;
  border: 1px solid #a8c4ec;
  border-radius: 3px;
  background: #fafcff;
`;

const SectionHead = styled.div`
  display: flex;
  align-items: center;
  gap: 4px;
  height: ${p => (p.$tall ? 14 : 12)}px;
  padding: 0 2px 0 3px;
  background: linear-gradient(#eaf3fe, #c9dff9);
`;

const SectionTitle = styled.h2`
  margin: 0;
  font-size: 9px;
  font-weight: normal;
  white-space: pre;
`;

const Viewing = styled.p`
  margin: 0;
  line-height: 20px;
  text-align: center;
  background: linear-gradient(#fff0 60%, #fff8), linear-gradient(90deg, #b8b8b8, #e4e4e4 50%, #b8b8b8);
`;

const ShareRow = styled.div`
  display: grid;
  grid-template-columns: 54px 46px 66px 1fr;
  height: 86px;
  padding: 2px 0 0 4px;
  border-bottom: 2px solid #c4d8f2;
  background: linear-gradient(#f4f4f6, #fff);
`;

const ShareItem = styled.div`
  display: flex;
  flex-direction: column;
  align-items: center;
  text-align: center;
  font-size: ${p => (p.$small ? 8 : 9)}px;
  line-height: 11px;
  color: ${p => (p.$on ? '#1c1c1c' : '#8a8a8a')};
`;

const RoundSlot = styled.div`
  height: 42px;
  display: grid;
  place-items: center;
  margin-bottom: 4px;
`;

const RoundButton = styled.button`
  display: grid;
  place-items: center;
  width: ${p => p.$d}px;
  height: ${p => p.$d}px;
  border: 2px solid ${p => (p.$on ? '#8fa8d4' : '#d2d2d2')};
  border-radius: 50%;
  background: ${p => (p.$on ? 'radial-gradient(circle at 50% 80%, #4c7ad0, #2c55a8)' : 'linear-gradient(#c2c2c2, #b0b0b0)')};
`;

const ScreenSelect = styled.button`
  display: flex;
  align-items: center;
  gap: 3px;
  height: 10px;
  padding: 0 3px;
  border: 1px solid #a4a4e4;
  border-radius: 2px;
  background: #e4e4ec;
  font-size: 8px;
  color: #777;
`;

const RecordRow = styled.div`
  display: flex;
  align-items: center;
  gap: 4px;
  height: 19px;
  padding: 0 2px;
  font-size: 8px;
`;

const StopRecording = styled.button`
  height: 13px;
  padding: 0 4px;
  background: #c8000a;
  color: #fff;
`;

const SettingsLink = styled.a`
  margin-left: auto;
  color: #1a1ae0;
`;

const ListSection = styled(Section)`
  flex: 1;
  display: flex;
  flex-direction: column;
`;

const TabRow = styled.div`
  display: flex;
  align-items: flex-end;
  gap: 2px;
  height: 22px;
  padding: 0 1px;
`;

const ListTab = styled.button`
  flex: 1;
  height: ${p => (p.$active ? 18 : 14)}px;
  border: 1px solid #9aabc4;
  border-bottom: 0;
  border-radius: 2px 2px 0 0;
  background: ${p => (p.$active ? '#f0f6ff' : '#d3dde9')};
  font-size: ${p => (p.$active ? 10 : 9)}px;
  font-weight: ${p => (p.$active ? 'bold' : 'normal')};
`;

const ListBox = styled.div`
  flex: 1;
  display: flex;
  margin: 0 2px;
  border: 1px solid #8c9cb8;
  background: #fff;
`;

const Roster = styled.table`
  flex: 1;
  align-self: flex-start;
  border-collapse: collapse;
  table-layout: fixed;
  th, td { padding: 0; border-right: 1px solid #c4c4c4; text-align: left; }
  th svg, td svg { margin: 0 auto; }
  th { height: 18px; background: linear-gradient(#dce8f8, #b4c8e4); }
  td { height: 15px; }
  tbody tr:nth-child(odd) { background: #e9e9e9; }
  th:last-child, td:last-child { border-right: 0; }
`;

const NameCell = styled.td`
  && { padding-left: 4px; }
`;

const NamesHead = styled.span`
  display: block;
  padding-left: 6px;
  white-space: nowrap;
`;

const TrackColumn = styled.div`
  width: 13px;
  display: flex;
  flex-direction: column;
`;

const TrackHead = styled.button`
  display: grid;
  place-items: center;
  height: 18px;
  background: linear-gradient(#dce8f8, #b4c8e4);
`;

const Track = styled.div`
  flex: 1;
  display: flex;
  flex-direction: column;
  align-items: center;
  justify-content: space-between;
  padding: 6px 0;
  background: #efefef;
`;

const ListButtons = styled.div`
  display: flex;
  gap: 2px;
  padding: 2px 3px 0;
`;

const ListButton = styled.button`
  display: flex;
  align-items: center;
  gap: 1px;
  height: 18px;
  padding: 0 2px;
  margin-left: ${p => (p.$end ? 'auto' : 0)};
  border: 1px solid ${p => (p.$off ? '#a4a4e4' : '#4040c8')};
  border-radius: 2px;
  background: linear-gradient(#fdfdfd, #dcdcdc);
  color: ${p => (p.$off ? '#999' : '#1c1c1c')};
`;

const SearchRow = styled.div`
  display: flex;
  align-items: center;
  gap: 5px;
  height: 20px;
  padding: 0 5px 0 4px;
`;

const SearchInput = styled.input`
  flex: 1;
  min-width: 0;
  height: 16px;
  border: 1px solid #888;
  background: #fff;
`;

const RoundDrop = styled.button`
  display: grid;
  place-items: center;
  width: 13px;
  height: 13px;
  border: 1px solid #3a6ab8;
  border-radius: 50%;
  background: #fff;
`;

const DotLine = styled.div`
  height: 5px;
  background: radial-gradient(#aebfd8 1px, #e8f0fb 1px) 0 0 / 4px 4px;
`;

const Info = styled.div`
  padding: 2px 4px;
  border: 1px solid #d4d8de;
  background: #fff;
  text-align: center;
  line-height: 12px;
  p { margin: 0; }
  b { font-size: 10px; }
`;

const Brand = styled.div`
  height: 23px;
  text-align: center;
  font: 16px/23px Lato, "Open Sans", sans-serif;
  color: #1c1c1c;
  b { font-weight: 900; }
`;

const Wallpaper = styled.div`
  display: flex;
  height: 13px;
  background: linear-gradient(90deg, #3e2a38, #5a3a4a 20%, #4a1c26 40%, #38202c);
`;

const ResizeCorner = styled.div`
  width: 36px;
  border-bottom: 1px solid #999;
  background: repeating-linear-gradient(135deg, #0000 0 2px, #b8b09a 2px 3px) right bottom / 10px 10px no-repeat, #e6f0fd;
`;

const RedShape = styled.div`
  width: 102px;
  margin: 0 0 2px 68px;
  background: linear-gradient(#a8000c, #d4101a);
`;

const names = [
  ['AleksandrS Aleksandr'], ['Irina Shipaeva', 'q'], ['Natalia Natalia', 'q'], ['Oleg Kalsin', 'q'],
  ['Ramis Katraleev'], ['YULAY LUTFULLIN'], ['Александр Александр'], ['Андрей Плешков'],
  ['Андрей Терещенко'], ['Владимир Жмаев', 'q'], ['Ирина Тюльканова', 'wq'], ['Каргапольцев Евгений', 'w'],
  ['наталья грачёва', 'w'], ['Наталья Сысоева', 'w'], ['Сафиуллин Айрат', 'q'], ['Струлев Владимир', 'w'],
  ['Ярулина Рашида', 'q'],
];

const menus = [
  ['Файл', 'Правка', 'Вид', 'Вставка', 'Формат', 'Сервис', 'Рисование', 'Размеры', 'Редактировать', 'Параметризация', 'Окно', 'Справка', 'GeoniCS', 'Топознаки'],
  ['Геоточки', 'Рельеф', 'Горизонтальная', 'Вертикальная', 'Благоустройство', 'Сети', 'Геометрия', 'Трассы', 'Профиль', 'Сечения', 'Утилиты', 'PS-Ядро', 'PS-Конструкции'],
  ['PS-Фундаменты', 'PS-Архитектура', 'Мебель'],
];

// "|" is a divider, "v" a small drop-down arrow, a trailing "+" marks a fly-out
const standardTools = 'page open save | print preview publish globe | cut copy paste match blockEdit | undo v redo v | hand zoomTime zoomWin+ zoomPrev | props palette toolPal sheet markup calc | help';
const drawTools = 'sheetYellow line xline pline polygon rect circle cloud spline ellipse block+ makeBlock point hatch gradient boundary region table letterA addSel dots';
const modifyTools = 'erase copyObj offset array move rotate scale stretch trim extend breakPt breakGap join mirror chamfer fillet explode';
const layerTools = 'layerBrush layerCheck layerIn layerOut';
const axisTools = 'gridAxis levels+ axisBlue+ leaderL+ axisV+ hatchBox+ arrowBlue+ boxCross+ textM+ blueBoxes+';
const detailTools = 'boltSet | curveL+ redTee+ smallBox+ | cornerRed+ loopRed+ beamGreen+ boltBox+ orange+ | mesh+ meshRed+ | zigzag+ fiveB+ | num smallBox+ zeroOne';
const textTools = 'letterA textI textEdit find spell fontBrush textScale textJust textBox';
const pileTools = 'question pileBlue+ arcBlue+ beamRed+ nine+ cageRed+ pinkGrid+ greenBox+ pinkX+ pinkTop+ blueGrid+';
const flyTools = ['greenBox', 'greenPair', 'redArrows', 'redHatch', 'stirrup', 'pinkFull', 'ibeam', 'mesh3', 'tealCalc', 'beamRed'];

const Tools = ({ list, size = 16 }) => list.split(' ').map((item, i) => {
  if (item === '|') return <Divider key={i} />;
  if (item === 'v') return <Caret key={i} $color="#555" />;
  const name = item.replace('+', '');
  return (
    <IconButton key={i} aria-label={name}>
      <Glyph name={name} size={size} fly={item.endsWith('+')} />
    </IconButton>
  );
});

const Combo = ({ label, value, width, pad, off, children }) => (
  <ComboBox $w={width} $pad={pad} $off={off}>
    {children}
    <Picker aria-label={label} disabled={off}><option>{value}</option></Picker>
    <Chevron $off={off}>
      <svg width="8" height="6"><path d="M1 1l3 3 3-3" fill="none" stroke="#4a5a80" strokeWidth="2" /></svg>
    </Chevron>
  </ComboBox>
);

const CadRibbon = () => (
  <Ribbon>
    <AppButton aria-label="Menu">
      <svg width="25" height="30" viewBox="0 0 25 30">
        <path d="M1 26L8 4l6-1 10 20-7 3-3-6-6 1-2 7z" fill="#c8141e" />
        <path d="M8 4l6-1 10 20-5-1z" fill="#e8505a" />
        <path d="M10 11l3 6-5 1z" fill="#8a8a8a" />
        <path d="M1 26l6-3 7-3 3 6H8l-2 2z" fill="#90101a" />
      </svg>
      <Caret $color="#222" />
    </AppButton>
    <RibbonBody>
      <QuickRow>
        <ComboBox $w={149} $pad={1} $gray>
          <Glyph name="gear" />
          <Picker aria-label="Workspace"><option>Тим</option></Picker>
          <Caret $color="#444" />
        </ComboBox>
        <IconRow><Tools list="page open save saveAs undo v redo v print v" /></IconRow>
        <FileName>Чертеж1.dwg</FileName>
        <svg width="6" height="8"><path d="M0 0l5 4-5 4z" fill="#111" /></svg>
        <KeywordInput aria-label="Поиск" placeholder="Введите ключевое слово/фразу" />
        <IconRow>
          <Tools list="binoc v key dish star" />
          <Divider $color="#555" />
          <Tools list="helpRound v" />
        </IconRow>
      </QuickRow>
      {menus.map((row, i) => (
        <MenuRow key={i} $first={i === 0} $start={i === 0 ? 5 : 2} $gap={i === 0 ? 17 : 12}>
          {row.map(item => <MenuLink key={item} href="#">{item}</MenuLink>)}
        </MenuRow>
      ))}
    </RibbonBody>
  </Ribbon>
);

const CadToolbars = () => (
  <Toolbars>
    <ToolRow>
      <Bar $w={539}><Tools list={standardTools} /></Bar>
      <Bar $w={289} $grow $tight>
        <Tools list="fontBrush" />
        <Combo label="Text style" value="PStudio" width={98} pad={10} />
        <Tools list="dimBrush" />
        <Combo label="Dimension style" value="PS_TICK" width={100} pad={10} />
        <Tools list="tableBrush" />
        <span>Sta</span>
      </Bar>
    </ToolRow>
    <ToolRow>
      <Bar $w={333}>
        <Tools list="layers" />
        <Combo label="Layer" value="RAZVS_ALL" width={250}>
          <Glyph name="bulb" size={13} />
          <Glyph name="sun" size={14} />
          <Glyph name="freeze" size={14} />
          <Glyph name="lock" size={14} />
          <Glyph name="square" size={12} />
        </Combo>
        <Tools list="layerCur layerPrev layerState" />
      </Bar>
      <Bar $w={495} $grow>
        <Combo label="Color" value="Послою" width={123}><Glyph name="square" size={12} /></Combo>
        <Combo label="Linetype" value="Послою" width={133}><LineSample $w={50} /></Combo>
        <Combo label="Lineweight" value="Послою" width={104}><LineSample $w={29} /></Combo>
        <Combo label="Plot style" value="Поцвету" width={99} off pad={4} />
      </Bar>
    </ToolRow>
    <ToolRow>
      <Bar $w={410}><Tools list={drawTools} /></Bar>
      <Bar $w={333}><Tools list={modifyTools} /></Bar>
      <Bar $w={84} $grow><Tools list={layerTools} /></Bar>
    </ToolRow>
    <ToolRow>
      <Bar $w={198}><Tools list={axisTools} /></Bar>
      <Bar $w={339}><Tools list={detailTools} /></Bar>
      <Bar $w={180} $apart><Tools list={textTools} /></Bar>
    </ToolRow>
  </Toolbars>
);

/* A schedule block on the drawing: frame, column lines and text scribbles */
const Schedule = ({ x, y, w, h, cols, rows, title }) => (
  <g fill="none" stroke="#f2f2f2">
    <rect x={x} y={y} width={w} height={h} strokeWidth="1.200" />
    <path d={cols.map(c => `M${x + c} ${y}v${h}`).join('')} />
    <path d={rows.map(r => `M${x} ${y + r}h${w}`).join('')} />
    <path d={`M${title[0]} ${y - 3}h${title[1]}`} strokeWidth="1.600" strokeDasharray="7 1 4 1 2 1" />
    {[0, ...rows].map((r, i) => (
      <path key={r} d={`M${x + 2} ${y + r + (i ? 3 : 4)}h${w - 4}`} strokeWidth={i ? 2 : 3} strokeDasharray={i ? '7 2 1 5 10 4' : '4 7 9 3 12 5 2 3'} />
    ))}
  </g>
);

/* x, y: centre line and top bracket of a pile detail */
const Detail = ({ x, y }) => (
  <g transform={`translate(${x} ${y})`} fill="none" stroke="#f2f2f2">
    <path d="M-14-6h10M2-6h12" strokeWidth="1.600" />
    <path d="M-5-7h8" strokeWidth="3" />
    <path d="M-9-1H8M-7-3v13M7-3v13M-7 10l-3 4M-7 10H7M-3 8v10M3 8v10M-3 14h6M-2 18v9l2 4 2-4v-9zM0 0v3M7 9l7 9h16M-8 14h-6M-13 21l8-1M7 10l5-3M7 10l6 3M9 24l8-3" />
    <path d="M-14 15h7M-14 23h4M14 6h14M15 12h11M15 18h14M15 22h9" strokeWidth="2" />
    <path d="M11 6l3 2-3 3M9 10h4" strokeWidth="1.600" />
  </g>
);

const Bubble = ({ x, y }) => <circle cx={x} cy={y} r="2.600" fill="#555c64" stroke="#eee" />;

const Model = () => (
  <Drawing>
    <defs>
      <pattern id="minor" x="11" y="3" width="24.250" height="24.250" patternUnits="userSpaceOnUse">
        <path d="M0 .5h24.500M.5 0v24.500" stroke="#272f39" />
      </pattern>
      <pattern id="major" x="46" y="99" width="121.250" height="121.250" patternUnits="userSpaceOnUse">
        <path d="M0 .5h121.500M.5 0v121.500" stroke="#2d3645" />
      </pattern>
    </defs>
    <rect width="100%" height="100%" fill="url(#minor)" />
    <rect width="100%" height="100%" fill="url(#major)" />
    <path d="M0 341.500h2000" stroke="#7a1a22" />
    <g transform="translate(-11 -226)">
      <g fill="none" stroke="#d8d8d8">
        <path d="M115 269.500h134M115 317.500h133M254.500 236v42M248.500 257v5h11v-5" />
        <path d="M115 363.500h145M115 392.500h134M115 421.500h134M115 450.500h134M115 479.500h134" />
        <path d="M122.500 362v117M126.500 362v117M130.500 360v135M159.500 363v132M188.500 363v132M218.500 363v132M247.500 363v132" />
        <path d="M130 483.500h118M130 487.500h118M157.500 426v55h92v-55M161.500 426v51h85v-51" />
        <path d="M124.500 375v98" strokeWidth="2" strokeDasharray="5 24" />
        <path d="M141 483.500h100" strokeWidth="2" strokeDasharray="5 24" />
        <path d="M177 351.500h24v24h-24zM180 354.500h18v18h-18zM190 361l10-16" />
      </g>
      <path d="M197 345l2-3 2 1 1-2 1 4 1 3h-7zM253 356l3-1 1 2 2-1 1 3h-7z" fill="#f4f4f4" />
      {[363, 392, 421, 450, 479].map(y => <Bubble key={y} x={113} y={y} />)}
      {[130, 159.5, 188.5, 218, 247].map(x => <Bubble key={x} x={x} y={497} />)}
      <Bubble x={112.5} y={269} />
      <Bubble x={112} y={317} />
      <path d="M156 363h13M159.500 353v14M214 363h13M218.500 353v14M247 353v16" stroke="#1414ff" strokeWidth="1.500" fill="none" />
      <path d="M157 363l3-3 3 3-3 3zM215 363l3-3 3 3-3 3z" fill="#1414ff" />
      <path d="M189 353v20M181 363h18" stroke="#14c814" strokeDasharray="4 2" />
      <rect x="184" y="360" width="9" height="6" fill="#b024d8" />
      <path d="M241 358h12v11h-12z" fill="#fff" />
      <path d="M242 359h3v3h-3zM249 359h3v3h-3zM242 365h3v3h-3zM249 365h3v3h-3z" fill="#d01414" />
      <circle cx="247" cy="363" r="3" fill="#1414ff" />
      <g fill="none">
        <path d="M159 387.500h60M159 391.500h60" stroke="#fff" strokeWidth="3" strokeDasharray="3 1" />
        <path d="M159 387.500h60M159 393.500h60" stroke="#d01414" strokeDasharray="2 3" />
        <path d="M159 395.500h60" stroke="#ddd" />
        <path d="M159 406.500h60" stroke="#8a0000" strokeWidth="2" />
        <path d="M159 435.500h90" stroke="#8a0000" strokeWidth="2" strokeDasharray="8 1" />
        <path d="M158 418.500h91M158 424.500h91" stroke="#fff" strokeWidth="2" />
        <path d="M158 421.500h91" stroke="#fff" strokeWidth="5" strokeDasharray="2 4 5 2" />
        <path d="M168 412v18M163 416h8M163 428h8M186 412v18M183 416h6M183 428h6M175 415v4M193 415v4M202 415v4M210 415v4M218 415v4M226 415v4M234 415v4" stroke="#fff" strokeWidth="1.500" />
        <path d="M176 421h2M192 422h2M205 421h2M222 422h2M242 421h6" stroke="#d01414" strokeWidth="2" />
        <path d="M151 415v12M155 415v12M151 421h4" stroke="#14c814" strokeWidth="1.500" />
        <path d="M146 417h9M146 425h9" stroke="#1414ff" />
      </g>
      <Schedule x={267} y={433} w={47} h={23} cols={[20, 37]} rows={[4, 10, 19]} title={[263, 56]} />
      <path d="M289 438h13M289 443h13M289 448h13" stroke="#f2f2f2" strokeWidth="3" />
      <Schedule x={290} y={489} w={91} h={15} cols={[7, 36, 68, 74, 81]} rows={[6, 10]} title={[309, 66]} />
      <Schedule x={409} y={438} w={105} h={25} cols={[10, 27, 53, 80, 87, 95]} rows={[8, 14, 19]} title={[443, 56]} />
      <Schedule x={450} y={262} w={90} h={18} cols={[8, 36, 67, 80]} rows={[7, 12]} title={[469, 66]} />
      <Schedule x={641} y={405} w={105} h={15} cols={[18, 32, 46, 61, 75, 89]} rows={[8]} title={[679, 29]} />
      <Schedule x={576} y={490} w={105} h={15} cols={[18, 32, 46, 61, 75, 89]} rows={[8]} title={[615, 29]} />
      <path d="M662 418h9v-3l-3-2h-4l-2 2zM691 418h9v-3l-3-2h-4l-2 2zM706 418h9v-3l-3-2h-4l-2 2zM597 503h9v-3l-3-2h-4l-2 2zM626 503h9v-3l-3-2h-4l-2 2zM641 503h9v-3l-3-2h-4l-2 2z" fill="#f2f2f2" />
      <g fill="none" stroke="#ddd">
        <path d="M316 378q21 12 43 0M315 384q23 9 43 0" />
        <path d="M317 377l-1 7M326 381l-1 5M337 383v5M347 381l2 5M357 377l2 6" stroke="#fff" strokeWidth="3" strokeDasharray="2 1" />
        <path d="M316 384h2M326 386h2M336 388h2M347 386h2M357 384h2M318 380h2M355 380h2" stroke="#e01414" strokeWidth="2" />
        <path d="M353 289.500h97M353 293.500h97M353 296.500h97M353 300.500h97M353 304.500h97M358.500 282v42M445.500 282v42M358 317.500h88M347 287h6l3 3h5" />
        <path d="M342 287h6M400 317h5" strokeWidth="2" />
        <path d="M360 291.500h90" stroke="#fff" strokeWidth="3" strokeDasharray="5 10 2 4" />
        <path d="M360 297v1M362 302v1M447 297h3M447 303h3" strokeWidth="3" />
        <path d="M389 278.500h27" strokeWidth="2" strokeDasharray="11 1" />
      </g>
      <Bubble x={358} y={326} />
      <Bubble x={446} y={326} />
      <path d="M535 269v22M541 297l3-3 3 3 3-3 3 3 3-3 3 3" stroke="#8a0000" strokeWidth="2" fill="none" />
      {[0, 1, 2, 3, 4, 5].map(r => (r % 2 ? [545, 554] : [541, 549, 558]).map(cx => (
        <g key={`${r}-${cx}`}>
          <circle cx={cx} cy={270 + r * 4.4} r="2.200" fill="#fff" />
          <circle cx={cx + 2} cy={272 + r * 4.4} r="1" fill="#d01414" />
        </g>
      )))}
      <Detail x={683} y={281} />
      <Detail x={782} y={284} />
      <path d="M776 287h12v8h-12zM779 284v12M785 284v12" fill="none" stroke="#f2f2f2" />
    </g>
  </Drawing>
);

const ViewCube = () => (
  <CubeWrap>
    <svg width="70" height="71" viewBox="0 0 70 71" fontFamily={arial}>
      <circle cx="35" cy="38" r="28" fill="none" stroke="#5a6067" strokeOpacity=".8" strokeWidth="7" />
      <rect x="21" y="24" width="28" height="28" fill="#b4b6b9" stroke="#8c8e92" />
      <text x="35" y="41" fontSize="8" textAnchor="middle" fill="#2c3440">Верх</text>
      <g fontSize="11" textAnchor="middle" fill="#c2c4c8">
        <text x="35" y="13">С</text>
        <text x="5" y="42">З</text>
        <text x="65" y="42">В</text>
      </g>
    </svg>
    <CubeLabel>МСК <Caret $color="#b9bbc2" /></CubeLabel>
  </CubeWrap>
);

const on = ['snapDots', 'mesh', 'angle', 'ducs', 'dyn', 'trans'];
const statusTools = ['snapPt', 'snapDots', 'mesh', 'ortho', 'polar', 'osnap', 'osnap3', 'angle', 'ducs', 'dyn', 'plus', 'trans', 'quick', 'selCycle'];

const Cells = ({ list }) => list.map(name => (
  <StatusCell key={name} $on={on.includes(name)} aria-label={name}><Glyph name={name} size={15} /></StatusCell>
));

const ScrollBar = ({ width }) => (
  <Scroller $w={width}>
    <ScrollButton>&lt;</ScrollButton>
    <ScrollButton $thumb>III</ScrollButton>
    <ScrollButton>&gt;</ScrollButton>
  </Scroller>
);

const CadBottom = () => (
  <>
    <SheetTabs>
      {['|◀', '◀', '▶', '▶|'].map(t => <NavCell key={t}>{t}</NavCell>)}
      <SheetTab $active>Модель</SheetTab>
      <SheetTab>Лист1</SheetTab>
      <Slash />
      <ScrollBar width={274} />
    </SheetTabs>
    <CommandArea>
      <CommandGrip />
      <CommandLines>
        <CommandLine>Команда: '_style</CommandLine>
        <CommandLine $last>Команда: <ScrollBar width={44} /></CommandLine>
      </CommandLines>
    </CommandArea>
    <Status>
      <StatusText>М 1: 100</StatusText>
      <Coords>65319, 64124, 0</Coords>
      <Cells list={statusTools} />
      <Spring />
      <StatusText $pad={1}>МОДЕЛЬ</StatusText>
      <Cells list={['modelTri', 'layoutBoxes']} />
      <StatusGap $w={10} />
      <StatusText $pad={1}><Glyph name="anno" size={14} />1:100<Caret /></StatusText>
      <Cells list={['annoSun', 'annoGray']} />
      <StatusGap $w={6} />
      <Cells list={['gear', 'unlock', 'hardware', 'isolate', 'bulb']} />
      <StatusGap $w={9} />
    </Status>
  </>
);

const closePath = 'M1.500 1.500l4 4M5.500 1.500l-4 4';
const dockPath = 'M1 1h2M1 1v5h5v-2M4 1h2v2M6 1L3 4';

const Win = ({ label, d }) => (
  <WinButton aria-label={label}>
    <svg width="7" height="7"><path d={d} fill="none" stroke="#111" strokeWidth="1.500" /></svg>
  </WinButton>
);

const Head = ({ title, open, dock = true, tall }) => (
  <SectionHead $tall={tall}>
    <Win label="Toggle" d={open ? 'M1 3.500h5' : 'M1 3.500h5M3.500 1v5'} />
    <SectionTitle>{title}</SectionTitle>
    {dock && (
      <WinButtons>
        <Win label="Undock" d={dockPath} />
        <Win label="Close" d={closePath} />
      </WinButtons>
    )}
  </SectionHead>
);

const ScreenSharing = () => (
  <Section>
    <Head title="Screen Sharing" open dock={false} tall />
    <Viewing>Now viewing <b>Timofei Timofei's</b> screen</Viewing>
    <ShareRow>
      <ShareItem>
        <RoundSlot><RoundButton $d={42} aria-label="Show My Screen"><Glyph name="play" size={20} /></RoundButton></RoundSlot>
        Show My
        <ScreenSelect>Screen <Caret $color="#777" /></ScreenSelect>
      </ShareItem>
      <ShareItem $small>
        <RoundSlot><RoundButton $d={29} aria-label="Stop Showing Screen"><Glyph name="stop" size={9} /></RoundButton></RoundSlot>
        Stop<br />Showing<br />Screen
      </ShareItem>
      <ShareItem>
        <RoundSlot><RoundButton $d={34} aria-label="Give Keyboard and Mouse"><Glyph name="pointer" size={18} /></RoundButton></RoundSlot>
        Give<br />Keyboard<br />&amp; Mouse
      </ShareItem>
      <ShareItem $on>
        <RoundSlot><RoundButton $d={34} $on aria-label="Change Presenter"><Glyph name="screens" size={18} /></RoundButton></RoundSlot>
        Change<br />Presenter
      </ShareItem>
    </ShareRow>
    <RecordRow>
      <StopRecording>Stop Recording</StopRecording>
      26.4 GB remaining
      <SettingsLink href="#">Settings</SettingsLink>
    </RecordRow>
  </Section>
);

const Attendees = () => (
  <ListSection>
    <Head title="Attendee List   (19 | Max 101)" open />
    <TabRow>
      <ListTab $active>Attendees (17)</ListTab>
      <ListTab>Staff (2)</ListTab>
    </TabRow>
    <ListBox>
      <Roster>
        <colgroup>
          {['mic', 'screen', 'warn', 'question', 'hand'].map(c => <col key={c} width={14} />)}
          <col />
        </colgroup>
        <thead>
          <tr>
            {['mic', 'pageGray', 'warnGray', 'qGray', 'handGray'].map(n => <th key={n}><Glyph name={n} size={11} /></th>)}
            <th><NamesHead>NAMES - ALPHABETICALLY</NamesHead></th>
          </tr>
        </thead>
        <tbody>
          {names.map(([name, flags = '']) => (
            <tr key={name}>
              <td><Glyph name="micMuted" size={11} /></td>
              <td />
              <td>{flags.includes('w') && <Glyph name="warn" size={11} />}</td>
              <td>{flags.includes('q') && <Glyph name="qBlue" size={9} />}</td>
              <td />
              <NameCell>{name}</NameCell>
            </tr>
          ))}
        </tbody>
      </Roster>
      <TrackColumn>
        <TrackHead aria-label="Sort"><Caret /></TrackHead>
        <Track>
          <svg width="7" height="4"><path d="M0 4l3.500-4L7 4z" fill="#aaa" /></svg>
          <Caret $color="#aaa" />
        </Track>
      </TrackColumn>
    </ListBox>
    <ListButtons>
      <ListButton><Glyph name="micMuted" size={12} />Mute All</ListButton>
      <ListButton $off><Glyph name="handDown" size={13} />All</ListButton>
      <ListButton $end>Invite Others</ListButton>
    </ListButtons>
    <SearchRow>
      <label htmlFor="search">Search</label>
      <SearchInput id="search" type="text" />
      <RoundDrop aria-label="Search options"><Caret /></RoundDrop>
    </SearchRow>
    <DotLine />
  </ListSection>
);

const ControlPanel = () => (
  <Side>
    <Panel>
      <PanelMenu>
        {['File', 'Options', 'View', 'Help'].map(t => <PanelLink key={t} href="#">{t}</PanelLink>)}
        <WinButtons>
          <Win label="Minimize" d="M1 5.500h5" />
          <Win label="Maximize" d="M1 1h5v5h-5z" />
          <Win label="Undock" d={dockPath} />
          <Win label="Close" d={closePath} />
        </WinButtons>
      </PanelMenu>
      <ScreenSharing />
      <Section><Head title="Dashboard" /></Section>
      <Attendees />
      <Section><Head title="Audio" dock={false} /></Section>
      <Section><Head title="Polls (0/0)" /></Section>
      <Section><Head title="Chat" /></Section>
      <Info>
        <p><b>«Project StudioCS Фундаменты – расчет и проектирование фундаментов»</b></p>
        <p>Webinar ID: 190-482-608</p>
      </Info>
      <Brand><b>GoTo</b>Webinar</Brand>
    </Panel>
    <Wallpaper>
      <ResizeCorner />
      <RedShape />
    </Wallpaper>
  </Side>
);

const flower = [[3, 3], [9, 3], [1.5, 7], [6, 6.5], [10.5, 7], [3, 11], [9, 11]];

const App = () => (
  <Page>
    <GlobalStyle />
    <Desktop>
      <Viewer>
        <TitleBar>
          <svg width="14" height="14">
            {flower.map(([x, y]) => <circle key={`${x}-${y}`} cx={x + 0.5} cy={y} r="2" fill="#3f7fd0" stroke="#16325e" />)}
          </svg>
          <Title>GoToWebinar Viewer</Title>
        </TitleBar>
        <ZoomRow><ZoomButton>Zoom: 100% <Caret /></ZoomButton></ZoomRow>
        <Frame>
          <CadRibbon />
          <CadToolbars />
          <Canvas>
            <Model />
            <ViewCube />
            <FloatBar>
              <Tools list={pileTools} size={15} />
              <CloseTab>x</CloseTab>
            </FloatBar>
            <Flyout>
              {flyTools.map((n, i) => (
                <IconButton key={n} $hot={i === 4} aria-label={n}><Glyph name={n} size={14} /></IconButton>
              ))}
            </Flyout>
            <Pointer><Glyph name="cursor" size={18} /></Pointer>
          </Canvas>
          <CadBottom />
        </Frame>
        <Footer>
          <CitrixMark>CİTRỊX</CitrixMark>
          <Talking><b>Talking:</b> Timofei Timofei</Talking>
        </Footer>
      </Viewer>
      <TaskTip>скрин.docx - Microsoft Word</TaskTip>
      <FloatStrip>
        <StripGrip />
        <StripButton $h={12} $edge="#b45018" $bg="#f06a14" aria-label="Hide"><Glyph name="orangeArrow" size={13} /></StripButton>
        <StripButton $h={19} $edge="#777" $bg="linear-gradient(#a8a8a8, #888)" aria-label="Mute"><Glyph name="micDark" size={13} /></StripButton>
        <StripButton $h={20} $round $edge="#1c408c" $bg="#3a66b8" aria-label="Presenter"><Glyph name="screens" size={12} /></StripButton>
        <StripButton $h={20} $round $edge="#1c408c" $bg="#3a66b8" aria-label="Full screen"><Glyph name="window" size={12} /></StripButton>
        <StripGrip />
      </FloatStrip>
      <ControlPanel />
    </Desktop>
  </Page>
);

export default App;
